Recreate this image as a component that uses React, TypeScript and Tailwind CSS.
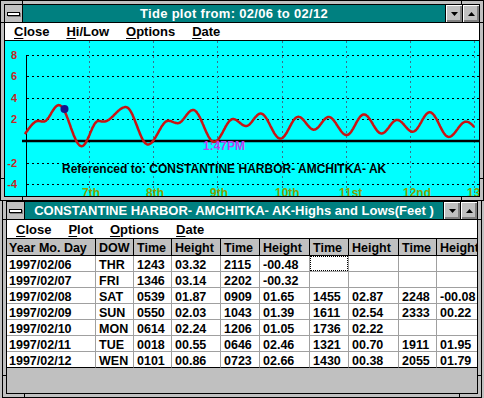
import React from "react";

type Ext = [number, number];

// hours from 02/06 00:00 and feet; the extra pairs on the 6th and 7th give the flat shoulders
const EXTREMES: Ext[] = [
  [-3, 0.1], [5, 1.85], [7, 1.8], [12.72, 3.32], [21.25, -0.48],
  [27.5, 1.85], [29.5, 1.8], [37.77, 3.14], [46.03, -0.32],
  [53.65, 1.87], [57.15, 1.65], [62.92, 2.87], [70.8, -0.08],
  [77.83, 2.03], [82.72, 1.39], [88.18, 2.54], [95.55, 0.22],
  [102.23, 2.24], [108.1, 1.05], [113.6, 2.22],
  [120.3, 0.55], [126.77, 2.46], [133.35, 0.7], [139.18, 1.95],
  [145.02, 0.86], [151.38, 2.66], [158.5, 0.38], [164.92, 1.79], [171.5, 0.7],
];

const X0 = 24.8;
const DAY = 64.2;
const Y0 = 141;
const FT = 10.8;
const px = (t: number) => X0 + (t * DAY) / 24;
const py = (h: number) => Y0 - h * FT;

function level(t: number) {
  for (let i = 0; i < EXTREMES.length - 1; i++) {
    const [t0, h0] = EXTREMES[i];
    const [t1, h1] = EXTREMES[i + 1];
    if (t >= t0 && t <= t1) {
      const p = (t - t0) / (t1 - t0);
      return h0 + ((h1 - h0) * (1 - Math.cos(Math.PI * p))) / 2;
    }
  }
  return 0;
}

const HEAD = ["Year Mo. Day", "DOW", "Time", "Height", "Time", "Height", "Time", "Height", "Time", "Height"];

const ROWS = [
  ["1997/02/06", "THR", "1243", "03.32", "2115", "-00.48", "", "", "", ""],
  ["1997/02/07", "FRI", "1346", "03.14", "2202", "-00.32", "", "", "", ""],
  ["1997/02/08", "SAT", "0539", "01.87", "0909", "01.65", "1455", "02.87", "2248", "-00.08"],
  ["1997/02/09", "SUN", "0550", "02.03", "1043", "01.39", "1611", "02.54", "2333", "00.22"],
  ["1997/02/10", "MON", "0614", "02.24", "1206", "01.05", "1736", "02.22", "", ""],
  ["1997/02/11", "TUE", "0018", "00.55", "0646", "02.46", "1321", "00.70", "1911", "01.95"],
  ["1997/02/12", "WEN", "0101", "00.86", "0723", "02.66", "1430", "00.38", "2055", "01.79"],
];

function Win({ className, children }: { className: string; children: React.ReactNode }) {
  return (
    <div className={`absolute border border-black bg-[#c0c0c0] p-[3px] ${className}`}>
      {/* sizing-border notches */}
      <div className="absolute left-[21px] top-0 h-[3px] w-px bg-black" />
      <div className="absolute right-[21px] top-0 h-[3px] w-px bg-black" />
      <div className="absolute bottom-0 left-[21px] h-[3px] w-px bg-black" />
      <div className="absolute bottom-0 right-[21px] h-[3px] w-px bg-black" />
      <div className="absolute left-0 top-[21px] h-px w-[3px] bg-black" />
      <div className="absolute right-0 top-[21px] h-px w-[3px] bg-black" />
      <div className="absolute bottom-[21px] left-0 h-px w-[3px] bg-black" />
      <div className="absolute bottom-[21px] right-0 h-px w-[3px] bg-black" />
      <div className="flex h-full flex-col overflow-hidden border border-black">{children}</div>
    </div>
  );
}

function CaptionButton({ up }: { up?: boolean }) {
  return (
    <div className="flex w-[17px] shrink-0 items-center justify-center border-l border-black bg-[#c0c0c0] shadow-[inset_1px_1px_0_#ffffff,inset_-1px_-1px_0_#808080,inset_-2px_-2px_0_#808080]">
      <svg width="7" height="4" viewBox="0 0 7 4">
        <path d={up ? "M3.5 0 7 4H0Z" : "M0 0h7L3.5 4Z"} fill="#000" />
      </svg>
    </div>
  );
}

function TitleBar({ title, wide }: { title: string; wide?: boolean }) {
  return (
    <div className="flex h-[18px] shrink-0 border-b border-black">
      <div className="flex w-[18px] shrink-0 items-center justify-center border-r border-black bg-[#c0c0c0]">
        <div className="h-[4px] w-[13px] border border-black bg-white shadow-[1px_1px_0_#808080]" />
      </div>
      <div
        className={`flex min-w-0 flex-1 items-center justify-center overflow-hidden whitespace-nowrap bg-[#008080] text-[13px] font-bold leading-[17px] text-white ${
          wide ? "tracking-[0.3px]" : ""
        }`}
      >
        {title}
      </div>
      <CaptionButton />
      <CaptionButton up />
    </div>
  );
}

function Menu({ items, className }: { items: string[]; className: string }) {
  return (
    <div
      className={`flex shrink-0 items-center gap-[1px] border-b border-black bg-white pl-[1px] text-[13px] font-bold text-black ${className}`}
    >
      {items.map((i) => (
        <span key={i} className="px-2 leading-[17px]">
          <span className="underline underline-offset-[2px]">{i[0]}</span>
          {i.slice(1)}
        </span>
      ))}
    </div>
  );
}

function TidePlot() {
  const pts: string[] = [];
  for (let t = 0; t <= 168; t += 0.25) pts.push(`${px(t).toFixed(1)},${py(level(t)).toFixed(1)}`);
  const levels = [8, 6, 4, 2, -2, -4];
  const days = ["7th", "8th", "9th", "10th", "11st", "12nd", "13"];
  return (
    <svg
      width={474}
      height={155}
      viewBox="5 41 474 155"
      className="block"
      fontFamily="'Liberation Sans', Arial, sans-serif"
      fontWeight="bold"
    >
      {levels.map((h) => {
        const y = Math.round(py(h)) + 0.5;
        return (
          <g key={h}>
            <line x1={27} x2={479} y1={y} y2={y} stroke="#000" strokeDasharray="2 3" />
            <text x={17} y={y + 3} textAnchor="end" fontSize={11} fill="#c02828">
              {h}
            </text>
          </g>
        );
      })}
      {days.map((d, i) => {
        const x = Math.round(X0 + DAY * (i + 1)) + 0.5;
        return (
          <g key={d}>
            <line x1={x} x2={x} y1={41} y2={196} stroke="#3c6e8c" strokeDasharray="2 3" />
            <text x={x - 7.5} y={196.5} fontSize={12} fill="#86a000">
              {d}
            </text>
          </g>
        );
      })}
      <line x1={26.5} x2={26.5} y1={55} y2={196} stroke="#000" />
      <line x1={22} x2={479} y1={141} y2={141} stroke="#000" strokeWidth={2.5} />
      <text x={62} y={173} fontSize={12} fill="#000">
        Referenced to: CONSTANTINE HARBOR- AMCHITKA- AK
      </text>
      <polyline points={pts.join(" ")} fill="none" stroke="#c81414" strokeWidth={2.5} strokeLinejoin="round" />
      <text x={203} y={150} fontSize={12} fill="#c03cf0">
        1:47PM
      </text>
      <circle cx={64.5} cy={109} r={4} fill="#14148c" />
    </svg>
  );
}

function HighLowTable() {
  return (
    <div className="grid w-max grid-cols-[89px_38px_38px_49px_39px_50px_39px_50px_38px_50px] text-[12.5px] font-bold text-black">
      {HEAD.map((h, i) => (
        <div
          key={i}
          className={`h-[17px] overflow-hidden whitespace-nowrap border-b border-r border-black bg-[#c0c0c0] pt-[3px] leading-[13px] ${
            i === 0 ? "pl-[2px]" : "pl-[3px]"
          }`}
        >
          {h}
        </div>
      ))}
      {ROWS.map((r, ri) =>
        r.map((c, ci) => (
          <div
            key={`${ri}-${ci}`}
            className={`relative h-[16px] overflow-hidden whitespace-nowrap border-b border-r border-r-[#a0a0a0] bg-white pt-[2px] leading-[14px] ${
              ri === ROWS.length - 1 ? "border-b-black" : "border-b-[#a0a0a0]"
            } ${ci === 0 ? "pl-[2px]" : "pl-[3px]"}`}
          >
            {c}
            {ri === 0 && ci === 6 && <div className="absolute inset-0 border border-dotted border-black" />}
          </div>
        ))
      )}
    </div>
  );
}

export default function App() {
  return (
    <div className="relative h-[398px] w-[484px] overflow-hidden bg-[#c0c0c0] font-['Liberation_Sans',Arial,sans-serif] text-black">
      <Win className="left-[2px] top-[197px] h-[201px] w-[480px]">
        <TitleBar title="CONSTANTINE HARBOR- AMCHITKA- AK-Highs and Lows(Feet )" />
        <Menu items={["Close", "Plot", "Options", "Date"]} className="h-[19px]" />
        <div className="overflow-hidden">
          <HighLowTable />
        </div>
        <div className="flex-1 bg-[#c0c0c0]" />
      </Win>

      <Win className="left-0 top-0 z-10 h-[201px] w-[484px]">
        <TitleBar title="Tide plot from: 02/06 to 02/12" wide />
        <Menu items={["Close", "Hi/Low", "Options", "Date"]} className="h-[18px]" />
        <div className="flex-1 overflow-hidden bg-[#00ffff]">
          <TidePlot />
        </div>
      </Win>
    </div>
  );
}
